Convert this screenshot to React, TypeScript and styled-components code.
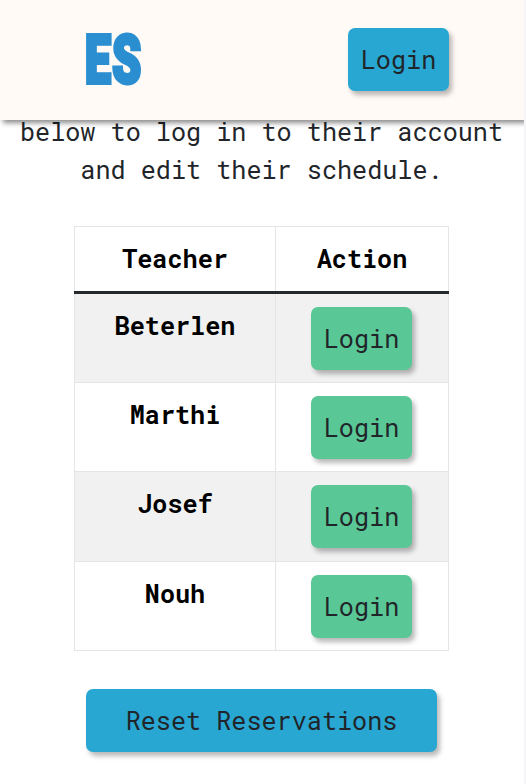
import React from 'react';
import styled, { createGlobalStyle } from 'styled-components';

const GlobalStyle = createGlobalStyle`
  *, *::before, *::after { box-sizing: border-box; }
  html, body { margin: 0; height: 784px; overflow: hidden; }
  body {
    background: #fff;
    color: #212529;
    font-family: "Roboto Mono", "DejaVu Sans Mono", monospace;
    font-size: 25.17px;
    line-height: 38px;
  }
`;

const Page = styled.div`
  width: 526px;
  height: 784px;
  display: flex;
  flex-direction: column;
  border-right: 2px solid #f5f5f7;
  overflow: hidden;
`;

const Header = styled.header`
  position: relative;
  z-index: 1;
  flex: none;
  height: 120px;
  padding: 0 75px 1px 85px;
  display: flex;
  align-items: center;
  justify-content: space-between;
  background: #fffaf6;
  box-shadow: 3px 3px 5px rgba(0, 0, 0, 0.45);
`;

const Logo = styled.span`
  width: 56px;
  padding-top: 3px;
  font-family: Roboto, sans-serif;
  font-size: 66px;
  font-weight: 900;
  line-height: 72px;
  letter-spacing: 2px;
  color: #2a8ed0;
  -webkit-text-stroke: 4px #2a8ed0;
  transform: scaleX(0.7);
  transform-origin: left center;
`;

const Button = styled.button<{ $tone?: 'blue' | 'green'; $width?: number }>`
  width: ${({ $width = 101 }) => $width}px;
  height: 63px;
  padding: 1px 0 0;
  border: 0;
  border-radius: 7px;
  background: ${({ $tone = 'blue' }) => ($tone === 'green' ? '#5ac896' : '#28a7d2')};
  box-shadow: 3px 4px 5px rgba(0, 0, 0, 0.28);
  color: #212529;
  font: inherit;
  display: block;
`;

const Main = styled.main`
  display: flex;
  flex-direction: column;
  align-items: center;
  padding-right: 1px;
`;

const Intro = styled.p`
  width: 523px;
  margin: -7px 0 37px;
  text-align: center;
  white-space: nowrap;
`;

const Table = styled.table`
  width: 375px;
  height: 425px;
  margin: 0 0 38px;
  border-collapse: collapse;
  table-layout: fixed;
  color: #000;
`;

const HeadCell = styled.th<{ $width: number }>`
  width: ${({ $width }) => $width}px;
  height: 66px;
  padding: 0;
  border: 1px solid #e4e5e6;
  border-bottom: 3px solid #25292c;
  font-weight: 700;
`;

const Row = styled.tr`
  height: 89.5px;
  &:nth-child(odd) { background: #f1f1f1; }
`;

const Cell = styled.td`
  padding: 13px 0 0;
  border: 1px solid #e4e5e6;
  text-align: center;
  vertical-align: top;
  font-weight: 700;
`;

const ActionCell = styled(Cell)`
  padding-left: 35px;
  font-weight: 400;
`;

const teachers = ['Beterlen', 'Marthi', 'Josef', 'Nouh'];

export default function App() {
  return (
    <>
      <GlobalStyle />
      <Page>
        <Header>
          <Logo>ES</Logo>
          <Button>Login</Button>
        </Header>
        <Main>
          <Intro>
            below to log in to their account
            <br />
            and edit their schedule.
          </Intro>
          <Table>
            <thead>
              <tr>
                <HeadCell $width={201}>Teacher</HeadCell>
                <HeadCell $width={173}>Action</HeadCell>
              </tr>
            </thead>
            <tbody>
              {teachers.map((name) => (
                <Row key={name}>
                  <Cell>{name}</Cell>
                  <ActionCell>
                    <Button $tone="green">Login</Button>
                  </ActionCell>
                </Row>
              ))}
            </tbody>
          </Table>
          <Button $width={351}>Reset Reservations</Button>
        </Main>
      </Page>
    </>
  );
}
